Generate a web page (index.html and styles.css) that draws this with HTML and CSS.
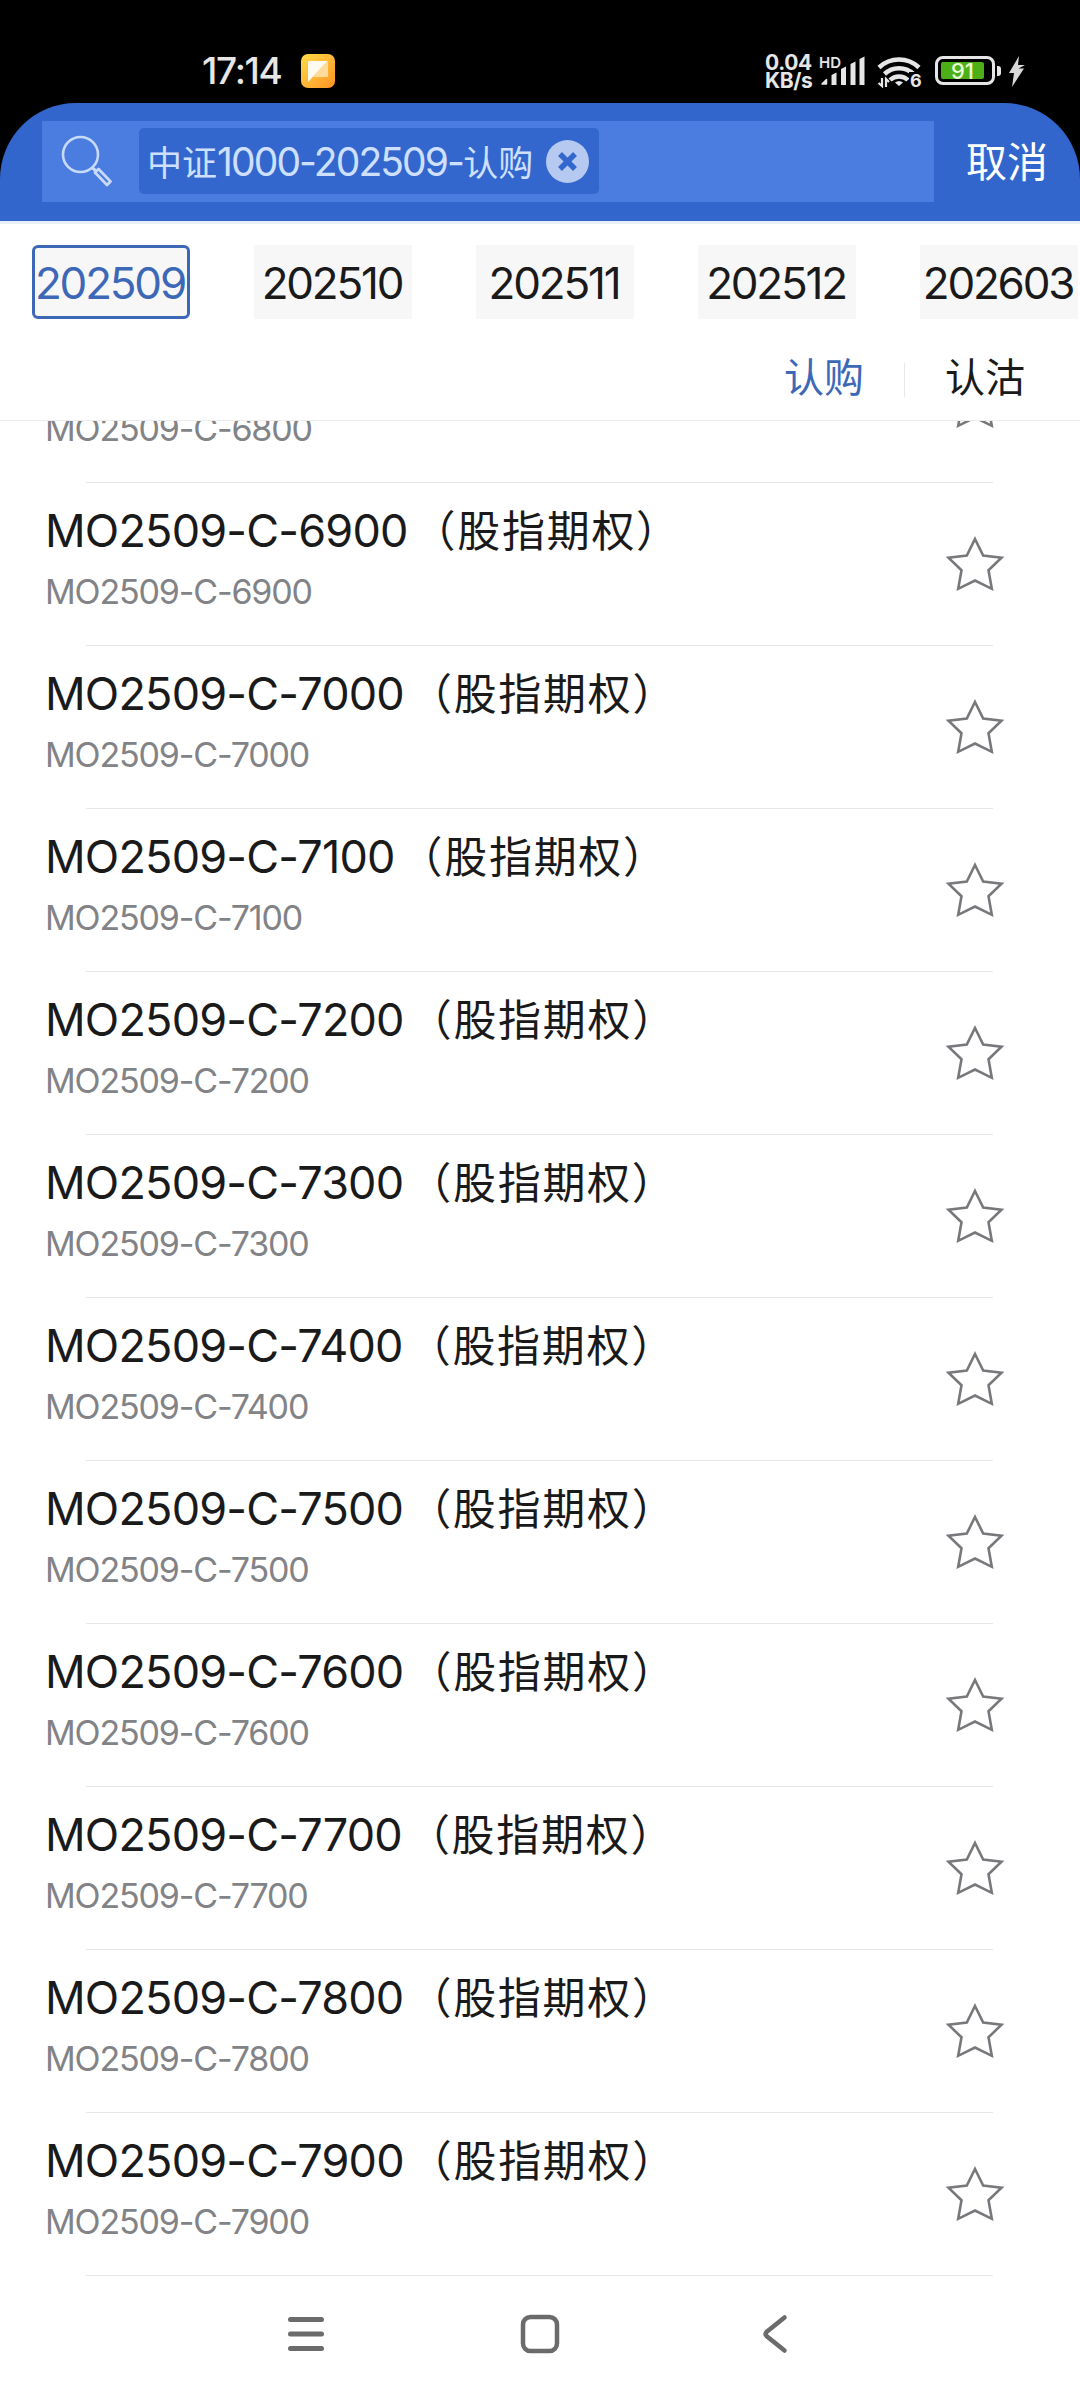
FILE: index.html
```html
<!DOCTYPE html>
<html lang="zh-CN">
<head>
  <meta charset="UTF-8">
  <title>股指期权</title>
  <link rel="stylesheet" href="styles.css">
</head>
<body>
  <div class="status-bar">
    <span class="time">17:14</span>
    <svg class="app-icon" width="34" height="34" viewBox="0 0 34 34">
      <defs>
        <linearGradient id="note" x1="0" y1="0" x2="1" y2="1">
          <stop offset="0" stop-color="#ffdc48"/>
          <stop offset="1" stop-color="#ff9425"/>
        </linearGradient>
      </defs>
      <rect width="34" height="34" rx="7" fill="url(#note)"/>
      <path d="M26 7.500L27 8V23H12Z" fill="#ffdc9b"/>
      <path d="M8 7H26.500L7 28V8Z" fill="#fffaf0"/>
    </svg>
    <div class="status-right">
      <div class="speed"><span>0.04</span><span>KB/s</span></div>
      <div class="signal">
        <span class="hd">HD</span>
        <svg width="46" height="32" viewBox="0 0 46 32" fill="#e6e6e6">
          <path d="M3 30L7.500 25.500V30Z" stroke="#e6e6e6" stroke-width="1.500" stroke-linejoin="round"/>
          <path d="M12.500 21L17.500 18.500V31H12.500ZM22 15L27 12.500V31H22ZM31.500 10L36.500 7.500V31H31.500ZM40.500 5L45.500 2.500V31H40.500Z"/>
        </svg>
      </div>
      <div class="wifi">
        <svg width="44" height="34" viewBox="0 0 44 34" fill="none" stroke="#e6e6e6" stroke-width="4.500">
          <path d="M2 13.500A29 29 0 0 1 42 13.500M7.500 20A21 21 0 0 1 36.500 20M13 26A13 13 0 0 1 31 26"/>
          <path d="M18 28.500Q22 25.500 26 28.500L22 32Z" fill="#e6e6e6" stroke="none"/>
          <path d="M1.500 29L5 32V24M9 33V25L12 28" stroke-width="2.200"/>
        </svg>
        <span>6</span>
      </div>
      <div class="battery"><div class="level">91</div></div>
      <svg class="bolt" width="17" height="31" viewBox="0 0 17 31" fill="#d8d8d8">
        <path d="M11 0L1 17H6L4 31L16 12.500H10.500L17 9H10Z"/>
      </svg>
    </div>
  </div>

  <div class="header">
    <div class="search">
      <svg class="magnifier" width="54" height="56" viewBox="0 0 54 56" fill="none" stroke="#c8dafa">
        <circle cx="21.500" cy="20.500" r="17.500" stroke-width="2.600"/>
        <path d="M33 33.500L37 37" stroke-width="3"/>
        <path d="M36 38.500L39.500 35L51.500 47.500L48 51Z" stroke-width="2.800" stroke-linejoin="round"/>
      </svg>
      <div class="chip">
        <span class="keyword">中证<span class="num">1000-202509-</span>认购</span>
        <svg width="43" height="43" viewBox="0 0 43 43">
          <circle cx="21.500" cy="21.500" r="21.500" fill="#b5c9f1"/>
          <path d="M14 14L29 29M29 14L14 29" stroke="#3367cd" stroke-width="5.500"/>
        </svg>
      </div>
    </div>
    <div class="cancel">取消</div>
  </div>

  <div class="months">
    <div class="month active">202509</div>
    <div class="month">202510</div>
    <div class="month">202511</div>
    <div class="month">202512</div>
    <div class="month">202603</div>
  </div>

  <div class="types">
    <span class="type active">认购</span>
    <span class="type">认沽</span>
  </div>

  <div class="list" id="list"></div>

  <div class="nav">
    <svg width="38" height="40" viewBox="0 0 38 40" stroke="#6b6b6b" stroke-width="5" stroke-linecap="round">
      <path d="M3.500 5.500H34.500M3.500 20H34.500M3.500 34.500H34.500"/>
    </svg>
    <svg class="home" width="40" height="40" viewBox="0 0 40 40" fill="none" stroke="#6b6b6b" stroke-width="4.500">
      <rect x="3" y="3" width="34" height="34" rx="7.500"/>
    </svg>
    <svg width="26" height="40" viewBox="0 0 26 40" fill="none" stroke="#6b6b6b" stroke-width="4.500" stroke-linecap="round">
      <path d="M22.500 3.500L4.500 18Q2.500 20 4.500 22L22.500 36.500"/>
    </svg>
  </div>

  <script>
    const strikes = [6800, 6900, 7000, 7100, 7200, 7300, 7400, 7500, 7600, 7700, 7800, 7900];
    const list = document.getElementById("list");

    strikes.forEach(strike => {
      const code = "MO2509-C-" + strike;
      const row = document.createElement("div");
      row.className = "row";
      row.innerHTML = `
        <div class="info">
          <div class="name"><span class="num">${code}</span>（股指期权）</div>
          <div class="code">${code}</div>
        </div>
        <svg class="star" width="60" height="58" viewBox="0 0 60 58">
          <path d="M30 4L38.200 20.500L56.500 22.800L43.500 35.300L46.800 53.800L30 45.500L13.200 53.800L16.500 35.300L3.500 22.800L21.800 20.500Z"/>
        </svg>
      `;
      list.appendChild(row);
    });
  </script>
</body>
</html>
```

FILE: styles.css
```css
* {
  box-sizing: border-box;
}

body {
  margin: 0;
  width: 1080px;
  height: 2400px;
  overflow: hidden;
  display: flex;
  flex-direction: column;
  background: #fff;
  color: #1a1a1a;
  font-family: Inter, "Noto Sans CJK SC", sans-serif;
}

svg {
  display: block;
  flex: none;
}

/* status bar, black also shows behind the rounded header corners */
.status-bar {
  height: 183px;
  margin-bottom: -80px;
  padding: 54px 55px 0 202px;
  display: flex;
  align-items: flex-start;
  flex: none;
  background: #000;
  color: #e6e6e6;
}

.time {
  width: 99px;
  font-size: 37px;
  line-height: 34px;
  font-weight: 500;
  letter-spacing: -1.300px;
}

.status-right {
  margin-left: auto;
  display: flex;
}

.speed {
  width: 54px;
  font-size: 21px;
  font-weight: 700;
  line-height: 18px;
  letter-spacing: -0.4px;
}

.speed span {
  display: block;
  height: 18px;
}

.signal {
  width: 58px;
  position: relative;
}

.hd {
  position: absolute;
  left: 0;
  top: 1px;
  font-size: 15px;
  line-height: 15px;
  font-weight: 600;
}

.wifi {
  position: relative;
  width: 58px;
}

.wifi span {
  position: absolute;
  left: 32px;
  top: 18px;
  padding-left: 1px;
  background: #000;
  font-size: 18px;
  line-height: 18px;
  font-weight: 700;
}

.battery {
  position: relative;
  width: 60px;
  height: 29px;
  margin: 2px 13px 0 0;
  padding: 3px;
  border: 3px solid #e6e6e6;
  border-radius: 8px;
}

.battery::after {
  content: "";
  position: absolute;
  left: 59px;
  top: 7px;
  width: 4px;
  height: 10px;
  border-radius: 0 3px 3px 0;
  background: #e6e6e6;
}

.level {
  width: 43px;
  height: 17px;
  border-radius: 2px;
  background: #4caf17;
  color: #eaffd8;
  font-size: 22px;
  line-height: 18px;
  font-weight: 500;
  text-align: center;
}

.bolt {
  margin-top: 2px;
}

.header {
  height: 121px;
  padding: 18px 32px 0 42px;
  display: flex;
  justify-content: space-between;
  flex: none;
  position: relative;
  background: #3266cc;
  border-radius: 76px 76px 0 0;
  border-bottom: 3px solid #e9effc;
}

.search {
  width: 892px;
  height: 81px;
  padding: 7px 0 0 17px;
  display: flex;
  align-items: flex-start;
  background: #4b7de1;
}

.magnifier {
  margin: 6px 26px 0 0;
}

.chip {
  width: 460px;
  height: 66px;
  padding: 0 10px 0 8px;
  display: flex;
  align-items: center;
  justify-content: space-between;
  border-radius: 5px;
  background: #3367cd;
  color: #cfe0ff;
  white-space: nowrap;
}

.keyword {
  padding-bottom: 2px;
  font-size: 35px;
}

.chip .num {
  font-size: 39px;
  letter-spacing: -1.900px;
}

.cancel {
  color: #fff;
  font-size: 41px;
  line-height: 83px;
}

.months {
  padding: 21px 0 0 32px;
  display: flex;
  gap: 64px;
  flex: none;
}

.month {
  width: 158px;
  height: 74px;
  padding: 2px 2px 0 0;
  display: flex;
  align-items: center;
  justify-content: center;
  flex: none;
  background: #f7f7f8;
  font-size: 44px;
  letter-spacing: -2.200px;
}

.month.active {
  border: 3px solid #3d68b7;
  border-radius: 6px;
  color: #3d68b7;
}

.types {
  height: 102px;
  padding-right: 55px;
  display: flex;
  justify-content: flex-end;
  align-items: center;
  flex: none;
  border-bottom: 1px solid #ececec;
}

.type {
  padding-top: 17px;
  font-size: 40px;
  line-height: 48px;
}

.type.active {
  margin-right: 81px;
  position: relative;
  color: #3d68b7;
}

.type.active::after {
  content: "";
  position: absolute;
  right: -41px;
  top: 26px;
  width: 1px;
  height: 34px;
  background: #e8e8e8;
}

.list {
  height: 1855px;
  display: flex;
  flex-direction: column;
  justify-content: flex-end;
  flex: none;
  overflow: hidden;
}

.row {
  height: 163px;
  padding: 0 75px 0 45px;
  display: flex;
  justify-content: space-between;
  flex: none;
  background: linear-gradient(#e6e6e6, #e6e6e6) 86px 100% / 907px 1px no-repeat;
}

.name {
  margin-top: 20px;
  font-size: 43px;
  line-height: 56px;
  letter-spacing: 1.700px;
  white-space: nowrap;
}

.name .num {
  margin-right: 5px;
  font-size: 45px;
  letter-spacing: -0.800px;
}

.code {
  margin-top: 13px;
  color: #828387;
  font-size: 34px;
  line-height: 40px;
  letter-spacing: -1.150px;
}

.star {
  margin-top: 52px;
}

.star path {
  fill: none;
  stroke: #77787c;
  stroke-width: 2.600;
}

.nav {
  height: 124px;
  padding: 38px 292px 0 287px;
  display: flex;
  justify-content: space-between;
  flex: none;
}

.home {
  margin-right: 7px;
}
```
